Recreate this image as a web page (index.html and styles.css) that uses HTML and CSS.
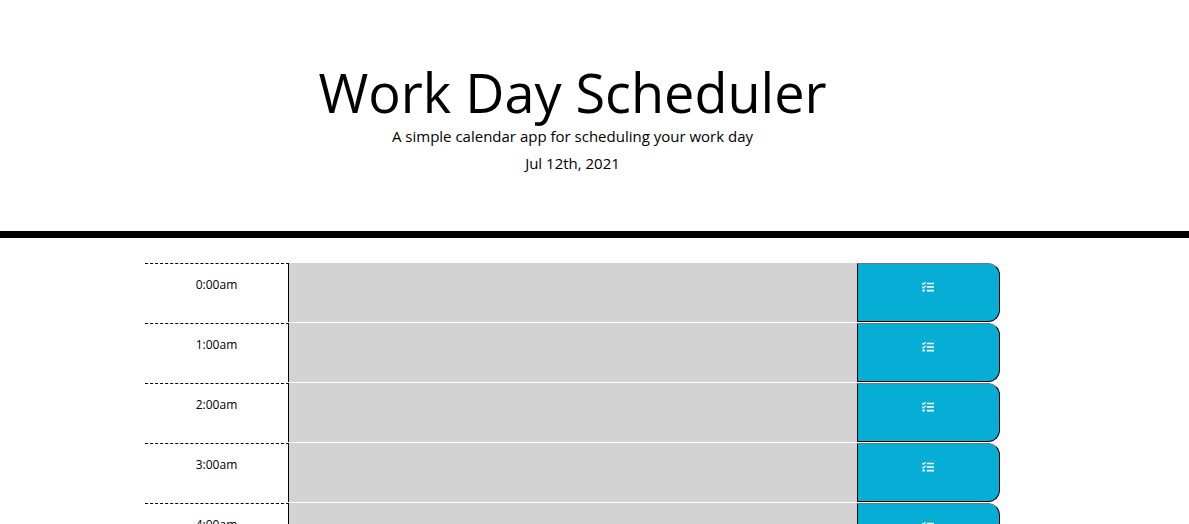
FILE: index.html
```
<!DOCTYPE html>
<html lang="en">
<head>
<meta charset="utf-8">
<title>Work Day Scheduler</title>
<link rel="stylesheet" href="styles.css">
</head>
<body>
<svg class="sprite" aria-hidden="true">
  <symbol id="tasks" viewBox="0 0 12 10">
    <path d="M.2 1.3l1.1 1L3.6.2M.2 4.9l1.1 1 2.3-2.1" fill="none" stroke="#fff" stroke-width="1.2"/>
    <circle cx="1.6" cy="8.5" r="1.2" fill="#fff"/>
    <path d="M4.8.7H12v1.6H4.8zM4.8 4.2H12v1.6H4.8zM4.8 7.8H12v1.6H4.8z" fill="#fff"/>
  </symbol>
</svg>
<header class="jumbotron">
  <h1 class="title">Work Day Scheduler</h1>
  <p class="lead">A simple calendar app for scheduling your work day</p>
  <p class="date">Jul 12th, 2021</p>
</header>
<main class="schedule">
  <div class="row"><div class="hour">0:00am</div><div class="past"></div><button class="save" aria-label="Save"><svg class="icon"><use href="#tasks"/></svg></button></div>
  <div class="row"><div class="hour">1:00am</div><div class="past"></div><button class="save" aria-label="Save"><svg class="icon"><use href="#tasks"/></svg></button></div>
  <div class="row"><div class="hour">2:00am</div><div class="past"></div><button class="save" aria-label="Save"><svg class="icon"><use href="#tasks"/></svg></button></div>
  <div class="row"><div class="hour">3:00am</div><div class="past"></div><button class="save" aria-label="Save"><svg class="icon"><use href="#tasks"/></svg></button></div>
  <div class="row"><div class="hour">4:00am</div><div class="past"></div><button class="save" aria-label="Save"><svg class="icon"><use href="#tasks"/></svg></button></div>
</main>
</body>
</html>
```

FILE: styles.css
```
* { box-sizing: border-box; }
body {
  margin: 0;
  height: 524px;
  overflow: hidden;
  background: #fff;
  color: #000;
  font-family: "Open Sans", sans-serif;
}
.sprite { display: none; }
.jumbotron {
  height: 238px;
  padding: 60px 44px 0 0;
  border-bottom: 7px solid #000;
  text-align: center;
}
.title {
  margin: 0;
  font-size: 54px;
  font-weight: 400;
  line-height: 65px;
}
.lead, .date {
  margin: 0;
  font-size: 15px;
  line-height: 22px;
}
.date { margin-top: 5px; }
.schedule {
  width: 855px;
  margin: 25px 0 0 145px;
}
.row {
  display: grid;
  grid-template-columns: 144px 568px 143px;
  height: 60px;
}
.hour {
  height: 59px;
  padding-top: 12px;
  border-top: 1px dashed #000;
  border-right: 1px solid #000;
  font-size: 12px;
  line-height: 18px;
  text-align: center;
}
.past {
  height: 59px;
  background: #d3d3d3;
}
.save {
  display: flex;
  justify-content: center;
  height: 59px;
  margin: 0;
  padding: 18px 2px 0 0;
  border: 1px solid #000;
  border-top-color: #767676;
  border-radius: 0 12px 12px 0;
  background: #06aed5;
}
.icon { width: 12px; height: 10px; }
```
